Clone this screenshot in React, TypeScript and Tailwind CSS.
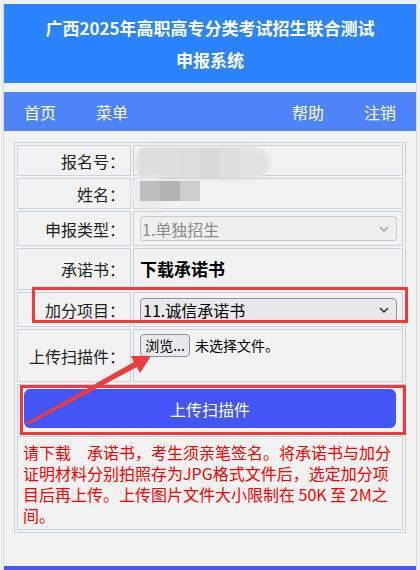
const font = { fontFamily: '"Noto Sans CJK SC", "Noto Sans", sans-serif' };

const Chevron = ({ color }: { color: string }) => (
  <svg width="10" height="6" viewBox="0 0 10 6" fill="none">
    <path d="M1 1l4 4 4-4" stroke={color} strokeWidth="1.4" />
  </svg>
);

const Row = ({ label, h, children, top }: { label: string; h: string; children?: React.ReactNode; top?: boolean }) => (
  <div className={`flex gap-[2px] ${h}`}>
    <div className="w-[114px] shrink-0 border border-[#c6d2e0] flex items-center justify-end pr-[5px] text-[16px] text-[#222]">
      {label}
    </div>
    <div className={`relative flex-1 border border-[#c6d2e0] flex pl-[6px] pr-[5px] ${top ? "items-start pt-[4px]" : "items-center"}`}>
      {children}
    </div>
  </div>
);

export default function App() {
  return (
    <div className="relative bg-[#f0f0f0] h-[570px] pt-[4px] pl-[3px] overflow-hidden" style={font}>
      <div className="w-[414px] border-x border-[#d9d9d9] bg-[#f2f2f2]">
        {/* header */}
        <div className="bg-[#2b83fe] h-[79px] pt-[8px] text-white text-center font-bold text-[17px] leading-[32px]">
          <div>广西2025年高职高专分类考试招生联合测试</div>
          <div>申报系统</div>
        </div>
        <div className="h-[9px]" />
        {/* nav */}
        <div className="bg-[#4f84f9] h-[39px] flex items-center justify-between px-[20px] text-white text-[16px]">
          <div className="flex gap-[40px]">
            <span>首页</span>
            <span>菜单</span>
          </div>
          <div className="flex gap-[40px]">
            <span>帮助</span>
            <span>注销</span>
          </div>
        </div>

        {/* form table */}
        <div className="px-[10px] pt-[11px] pb-[33px]">
          <div className="border border-[#c6d2e0] p-[2px] flex flex-col gap-[2px]">
            <Row label="报名号：" h="h-[31px]">
              <div className="absolute left-[0px] top-[1px] w-[136px] h-[32px] rounded-full bg-[#e2e2e2] blur-[2px]" />
              <div className="absolute left-[6px] top-[2px] flex h-[30px]">
                <div className="w-[40px] bg-[#dedede]" />
                <div className="w-[20px] bg-[#dcdcdc]" />
                <div className="w-[20px] bg-[#d9d9d9]" />
                <div className="w-[20px] bg-[#dedede]" />
              </div>
            </Row>
            <Row label="姓名：" h="h-[31px]">
              <div className="absolute left-[-4px] top-[-2px] w-[40px] h-[32px] rounded-full bg-[#ececec] blur-[2px]" />
              <div className="relative flex h-[20px] mt-[-6px]">
                <div className="w-[20px] bg-[#bdbdbd]" />
                <div className="w-[20px] bg-[#b3b3b3]" />
                <div className="w-[20px] bg-[#cdcdcd]" />
              </div>
            </Row>
            <Row label="申报类型：" h="h-[35px]">
              <div className="w-full h-[25px] rounded-[3px] border border-[#c9c9c9] bg-[#efefef] flex items-center justify-between pl-[1px] pr-[7px] text-[16px] text-[#8a8a8a]">
                <span>1.单独招生</span>
                <Chevron color="#9a9a9a" />
              </div>
            </Row>
            <Row label="承诺书：" h="h-[42px]">
              <span className="font-bold text-[17px] text-black">下载承诺书</span>
            </Row>
            <Row label="加分项目：" h="h-[35px]">
              <div className="w-full h-[24px] rounded-[4px] border border-[#8f8f9d] bg-[#e9e9ed] flex items-center justify-between pl-[2px] pr-[7px] text-[16px] text-black">
                <span>11.诚信承诺书</span>
                <Chevron color="#222" />
              </div>
            </Row>
            <Row label="上传扫描件：" h="h-[53px]" top>
              <div className="flex items-center gap-[5px] text-[14px] text-black">
                <div className="h-[23px] w-[50px] rounded-[4px] border border-[#8f8f9d] bg-[#e9e9ed] flex items-center justify-center">
                  浏览...
                </div>
                <span>未选择文件。</span>
              </div>
            </Row>
            <div className="h-[50px] border border-[#c6d2e0] pl-[6px] pr-[6px] pt-[4px]">
              <div className="h-[39px] rounded-[6px] bg-[#4455f7] flex items-center justify-center text-white text-[16px]">
                上传扫描件
              </div>
            </div>
            <div className="h-[94px] border border-[#c6d2e0] pl-[5px] pr-[4px] pt-[5px] text-[16px] leading-[21px] text-[#ff0000]">
              请下载　承诺书，考生须亲笔签名。将承诺书与加分证明材料分别拍照存为JPG格式文件后，选定加分项目后再上传。上传图片文件大小限制在 50K 至 2M之间。
            </div>
          </div>
        </div>
        <div className="h-[5px] bg-[#4657f5]" />
      </div>

      {/* annotations */}
      <div className="absolute left-[32px] top-[287px] w-[376px] h-[36px] border-[3px] border-[#ef3b3b] pointer-events-none" />
      <div className="absolute left-[20px] top-[385px] w-[386px] h-[50px] border-[3px] border-[#ef3b3b] pointer-events-none" />
      <svg className="absolute left-0 top-0 pointer-events-none" width="420" height="570" viewBox="0 0 420 570">
        <polygon points="26,423 134,362 131,356 151,356 140,373 137,367 28,425" fill="#ef3b3b" />
      </svg>
    </div>
  );
}
